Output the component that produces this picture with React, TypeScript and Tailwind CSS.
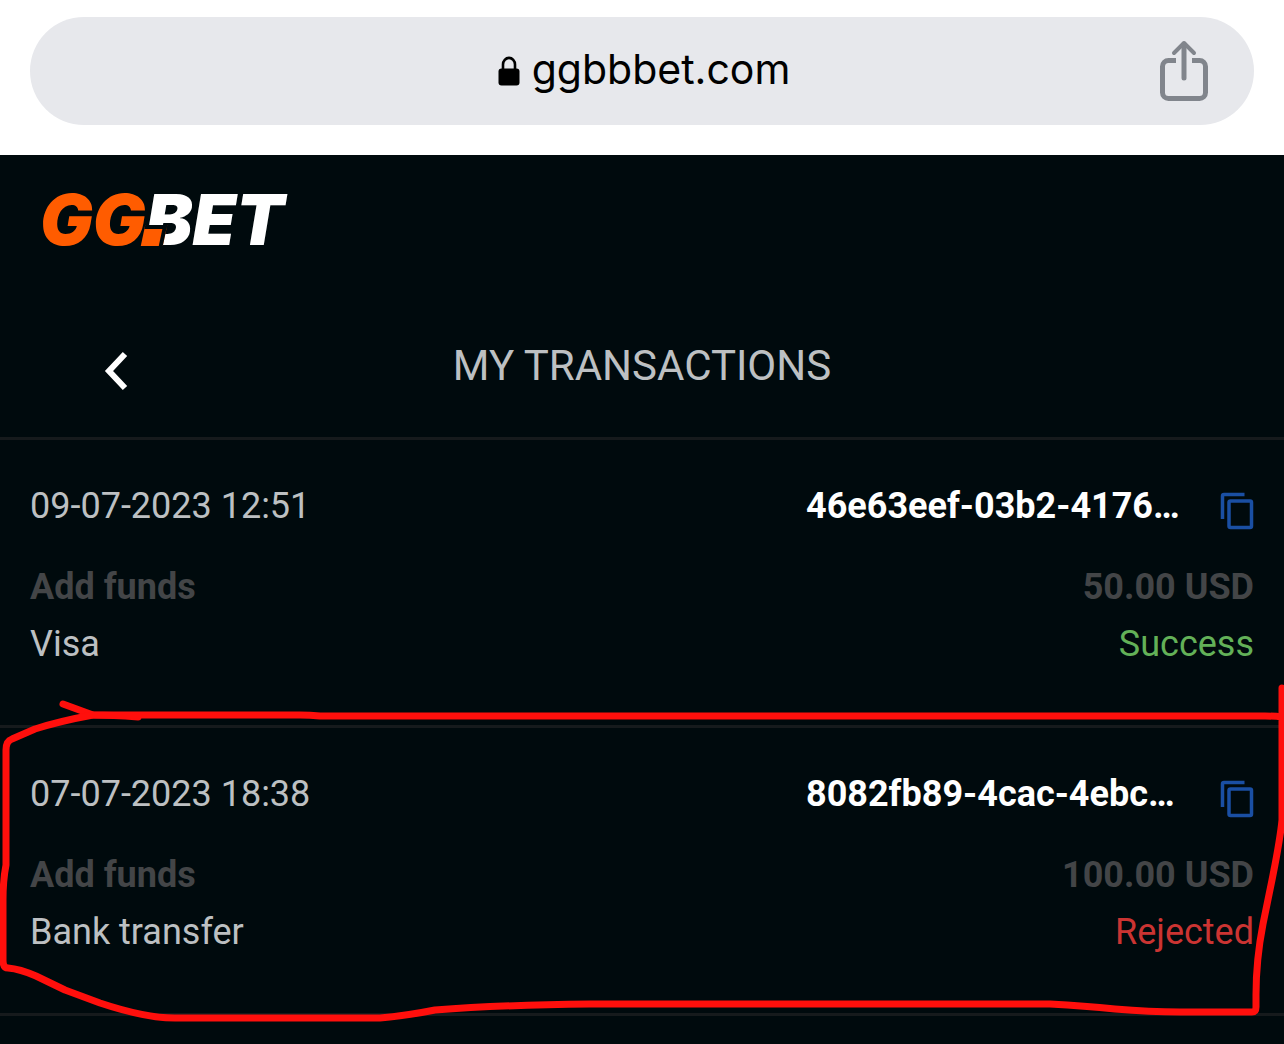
type Transaction = {
  date: string;
  id: string;
  kind: string;
  amount: string;
  method: string;
  status: string;
  success: boolean;
  circled?: boolean;
};

const transactions: Transaction[] = [
  {
    date: "09-07-2023 12:51",
    id: "46e63eef-03b2-4176…",
    kind: "Add funds",
    amount: "50.00 USD",
    method: "Visa",
    status: "Success",
    success: true,
  },
  {
    date: "07-07-2023 18:38",
    id: "8082fb89-4cac-4ebc…",
    kind: "Add funds",
    amount: "100.00 USD",
    method: "Bank transfer",
    status: "Rejected",
    success: false,
    circled: true,
  },
];

function LockIcon() {
  return (
    <svg className="h-[30px] w-[22px]" viewBox="0 0 22 30" aria-hidden="true">
      <path d="M5 14V8.5a6 6.6 0 0 1 12 0V14" fill="none" stroke="#000" strokeWidth="2.6" />
      <rect x="0.5" y="12.5" width="21" height="17" rx="3" fill="#000" />
    </svg>
  );
}

function ShareIcon() {
  return (
    <svg
      className="h-[62px] w-[50px]"
      viewBox="0 0 50 62"
      fill="none"
      stroke="#81858c"
      strokeWidth="5"
      aria-hidden="true"
    >
      <path d="M17 20.5H9.5A6 6 0 0 0 3.500 26.500V52.500a6 6 0 0 0 6 6h31a6 6 0 0 0 6-6V26.500a6 6 0 0 0-6-6H33" />
      <path d="M25 38V4" strokeLinecap="round" />
      <path d="M15 13L25 3l10 10" strokeWidth="4" strokeLinecap="round" strokeLinejoin="round" />
    </svg>
  );
}

function CopyIcon() {
  return (
    <svg
      className="h-[38px] w-[34px]"
      viewBox="0 0 34 38"
      fill="none"
      stroke="#1a4fa3"
      strokeWidth="3.5"
      aria-hidden="true"
    >
      <path d="M2.500 27V4a1.500 1.500 0 0 1 1.500-1.500h20.500" />
      <rect x="9" y="9" width="22.500" height="26.500" rx="1.500" />
    </svg>
  );
}

function Logo() {
  return (
    <a
      href="#home"
      aria-label="GG.BET"
      className="relative flex h-12 w-fit items-center font-['Inter',sans-serif] text-[70px] leading-[48px] font-black italic"
    >
      <span className="text-[#ff5c00]">GG</span>
      <span className="text-white">BET</span>
      <span className="absolute -bottom-0.5 left-[103px] h-[21px] w-[22px] -skew-x-12 border-t-4 border-r-4 border-[#000a0d] bg-[#ff5c00]" />
    </a>
  );
}

function PenMark() {
  return (
    <svg
      className="pointer-events-none absolute inset-x-0 -top-[45px] h-[345px] w-full"
      viewBox="0 683 1284 345"
      preserveAspectRatio="none"
      fill="none"
      stroke="#ff0f0c"
      strokeWidth="7"
      strokeLinecap="round"
      strokeLinejoin="round"
      aria-hidden="true"
    >
      <path d="M63 704L93 715C110 715 125 716 138 717" />
      <path d="M1282 688V717Q1275 716 1265 716H320Q310 715 300 715H93Q60 721 35 729L12 739Q6 741 6 750V865Q3 880 3 900V960Q3 968 8 968Q20 969 36 976L65 990L100 1003Q145 1018 175 1018H380Q405 1016 435 1010Q500 1005 590 1004H1050Q1085 1006 1115 1009Q1150 1012 1180 1012H1252Q1256 1012 1256 1007V995Q1256 960 1263 924L1272 880Q1280 840 1282 820V717" />
    </svg>
  );
}

function TransactionItem({ item }: { item: Transaction }) {
  return (
    <li className="relative flex flex-col border-b-[3px] border-[#161a1c] px-[30px] pt-9 pb-[52px]">
      <div className="flex h-[60px] items-center justify-between">
        <time>{item.date}</time>
        <div className="flex items-center gap-[38px]">
          <span className="w-[376px] font-bold whitespace-nowrap text-white">{item.id}</span>
          <button type="button" aria-label="Copy transaction ID" className="pt-2.5">
            <CopyIcon />
          </button>
        </div>
      </div>
      <div className="mt-[22px] flex h-[57px] items-center justify-between font-bold text-[#434547]">
        <span>{item.kind}</span>
        <span>{item.amount}</span>
      </div>
      <div className="flex h-[58px] items-center justify-between">
        <span>{item.method}</span>
        <span className={item.success ? "text-[#63b158]" : "text-[#cb3432]"}>{item.status}</span>
      </div>
      {item.circled && <PenMark />}
    </li>
  );
}

export default function App() {
  return (
    <div className="flex min-h-screen flex-col overflow-x-hidden bg-[#000a0d] font-['Roboto',sans-serif] text-[36px] leading-[42px] text-[#bdc0c2]">
      <div className="bg-white px-[30px] pt-[17px] pb-[30px]">
        <div className="grid h-[108px] grid-cols-[1fr_auto_1fr] items-center rounded-full bg-[#e7e8ec] px-[45px]">
          <div className="col-start-2 flex items-center gap-3 pl-1 font-['Inter',sans-serif] text-[41px] leading-[50px] text-black">
            <LockIcon />
            <span className="pb-1">ggbbbet.com</span>
          </div>
          <button type="button" aria-label="Share" className="justify-self-end">
            <ShareIcon />
          </button>
        </div>
      </div>

      <header className="px-10 pt-[41px]">
        <Logo />
      </header>

      <main className="flex flex-col">
        <div className="grid h-[196px] grid-cols-[1fr_auto_1fr] items-center border-b-[3px] border-[#161a1c] px-[104px] pt-[50px]">
          <button type="button" aria-label="Back" className="justify-self-start pt-2.5">
            <svg
              className="h-10 w-6"
              viewBox="0 0 24 40"
              fill="none"
              stroke="#fff"
              strokeWidth="6"
              aria-hidden="true"
            >
              <path d="M21 3L5 20l16 17" />
            </svg>
          </button>
          <h1 className="text-[42px] leading-[50px]">MY TRANSACTIONS</h1>
        </div>
        <ul>
          {transactions.map((item) => (
            <TransactionItem key={item.date} item={item} />
          ))}
        </ul>
      </main>
    </div>
  );
}
